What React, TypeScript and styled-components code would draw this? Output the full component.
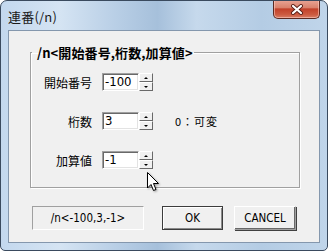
import React from 'react'
import styled, { createGlobalStyle } from 'styled-components'

const Global = createGlobalStyle`
  html, body {
    margin: 0;
    padding: 0;
    background: #ffffff;
  }
  * {
    box-sizing: border-box;
  }
`

const ui = `"MS UI Gothic", "Noto Sans CJK JP", "DejaVu Sans", sans-serif`

const Frame = styled.div`
  position: relative;
  width: 328px;
  height: 251px;
  border: 1px solid #3a4a5e;
  border-radius: 7px 7px 5px 5px;
  background: linear-gradient(
    90deg,
    #c3d8ee 0%,
    #d5e4f3 18%,
    #b9cfe6 35%,
    #a6c0db 48%,
    #c6d9ec 60%,
    #b4cce4 80%,
    #c0d5ea 100%
  );
  display: flex;
  flex-direction: column;
  padding: 0 7px 7px 7px;
  font-family: ${ui};
  overflow: hidden;
`

const TitleBar = styled.div`
  height: 29px;
  display: flex;
  align-items: flex-start;
  justify-content: space-between;
`

const Title = styled.span`
  margin-top: 6px;
  font-size: 13px;
  color: #1a1a1a;
  letter-spacing: 0.2px;
`

const CloseButton = styled.div`
  width: 47px;
  height: 19px;
  margin-top: -1px;
  border: 1px solid #5b2a22;
  border-top: none;
  border-radius: 0 0 5px 5px;
  background: linear-gradient(180deg, #e9a596 0%, #d9826d 42%, #c2412a 50%, #cc5a40 80%, #d77e66 100%);
  box-shadow: inset 0 0 0 1px rgba(255, 210, 200, 0.55);
  display: flex;
  align-items: center;
  justify-content: center;
`

const Client = styled.div`
  flex: 1;
  background: #f0f0f0;
  border: 1px solid #8497ad;
  display: flex;
  flex-direction: column;
  padding: 12px 0 0 21px;
  position: relative;
`

const Group = styled.fieldset`
  margin: 0;
  width: 270px;
  height: 145px;
  border: 1px solid #a0a0a0;
  box-shadow: 1px 1px 0 #ffffff, inset 1px 1px 0 #ffffff;
  padding: 11px 0 0 0;
  display: flex;
  flex-direction: column;
  gap: 21px;
`

const Legend = styled.legend`
  margin-left: 1px;
  padding: 0 1px 0 5px;
  font-size: 13px;
  font-weight: bold;
  color: #000;
  letter-spacing: 0.1px;
`

const Row = styled.div`
  display: flex;
  align-items: center;
  height: 18px;
`

const Label = styled.span`
  width: 61px;
  text-align: right;
  font-size: 12px;
  color: #000;
`

const Field = styled.div`
  margin-left: 10px;
  width: 37px;
  height: 18px;
  background: #ffffff;
  border-top: 1px solid #a0a0a0;
  border-left: 1px solid #a0a0a0;
  border-right: 1px solid #ffffff;
  border-bottom: 1px solid #ffffff;
  box-shadow: inset 1px 1px 0 #696969, inset -1px -1px 0 #e3e3e3;
  font-family: "DejaVu Sans Condensed", "DejaVu Sans", sans-serif;
  font-size: 13px;
  line-height: 16px;
  padding-left: 2px;
  color: #000;
`

const Spinner = styled.div`
  display: flex;
  flex-direction: column;
  width: 14px;
  height: 18px;
`

const SpinHalf = styled.div<{ $down?: boolean }>`
  flex: 1;
  background: #f0f0f0;
  border-top: 1px solid #ffffff;
  border-left: 1px solid #ffffff;
  border-right: 1px solid #696969;
  border-bottom: 1px solid #696969;
  display: flex;
  align-items: center;
  justify-content: center;
  &::after {
    content: '';
    width: 0;
    height: 0;
    border-left: 2px solid transparent;
    border-right: 2px solid transparent;
    ${({ $down }) => ($down ? 'border-top: 2px solid #000;' : 'border-bottom: 2px solid #000;')}
  }
`

const Note = styled.span`
  margin-left: 22px;
  font-size: 11px;
  color: #000;
  letter-spacing: 1px;
`

const Footer = styled.div`
  display: flex;
  align-items: center;
  margin-top: 18px;
  margin-left: 2px;
  height: 24px;
`

const Status = styled.div`
  width: 112px;
  height: 24px;
  border-top: 1px solid #a0a0a0;
  border-left: 1px solid #a0a0a0;
  border-right: 1px solid #ffffff;
  border-bottom: 1px solid #ffffff;
  display: flex;
  align-items: center;
  justify-content: center;
  font-family: "DejaVu Sans Condensed", "DejaVu Sans", sans-serif;
  font-size: 11.5px;
  color: #000;
`

const Button = styled.div<{ $default?: boolean; $gap: number; $w: number }>`
  margin-left: ${({ $gap }) => $gap}px;
  width: ${({ $w }) => $w}px;
  height: 24px;
  background: #f0f0f0;
  border: 1px solid ${({ $default }) => ($default ? '#3c3c3c' : '#a0a0a0')};
  border-top-color: ${({ $default }) => ($default ? '#3c3c3c' : '#ffffff')};
  border-left-color: ${({ $default }) => ($default ? '#3c3c3c' : '#ffffff')};
  box-shadow: ${({ $default }) =>
    $default
      ? 'inset 1px 1px 0 #ffffff, inset -1px -1px 0 #8a8a8a'
      : 'inset -1px -1px 0 #696969, 1px 1px 0 #404040'};
  display: flex;
  align-items: center;
  justify-content: center;
  font-family: "DejaVu Sans Condensed", "DejaVu Sans", sans-serif;
  font-size: 11.5px;
  color: #000;
`

const Cursor = styled.svg`
  position: absolute;
  left: 138px;
  top: 141px;
  filter: drop-shadow(1px 1px 1px rgba(0, 0, 0, 0.35));
`

const NumberRow = ({ label, value, note }: { label: string; value: string; note?: string }) => (
  <Row>
    <Label>{label}</Label>
    <Field>{value}</Field>
    <Spinner>
      <SpinHalf />
      <SpinHalf $down />
    </Spinner>
    {note && <Note>{note}</Note>}
  </Row>
)

const App = (): JSX.Element => {
  return (
    <>
      <Global />
      <Frame>
        <TitleBar>
          <Title>連番(/n)</Title>
          <CloseButton>
            <svg width="14" height="11" viewBox="0 0 14 11">
              <path d="M3 2 L11 9 M11 2 L3 9" stroke="#5a2018" strokeWidth="4" strokeLinecap="round" />
              <path d="M3 2 L11 9 M11 2 L3 9" stroke="#ffffff" strokeWidth="2.2" strokeLinecap="round" />
            </svg>
          </CloseButton>
        </TitleBar>
        <Client>
          <Group>
            <Legend>/n&lt;開始番号,桁数,加算値&gt;</Legend>
            <NumberRow label="開始番号" value="-100" />
            <NumberRow label="桁数" value="3" note="0：可変" />
            <NumberRow label="加算値" value="-1" />
          </Group>
          <Footer>
            <Status>/n&lt;-100,3,-1&gt;</Status>
            <Button $default $gap={18} $w={61}>OK</Button>
            <Button $gap={11} $w={62}>CANCEL</Button>
          </Footer>
          <Cursor width="13" height="20" viewBox="0 0 13 20">
            <path
              d="M0.5 0.5 L0.5 16 L4 12.5 L6.5 18.5 L9 17.5 L6.5 11.5 L11.5 11.5 Z"
              fill="#ffffff"
              stroke="#000000"
              strokeWidth="1"
              strokeLinejoin="round"
            />
          </Cursor>
        </Client>
      </Frame>
    </>
  )
}

export default App
